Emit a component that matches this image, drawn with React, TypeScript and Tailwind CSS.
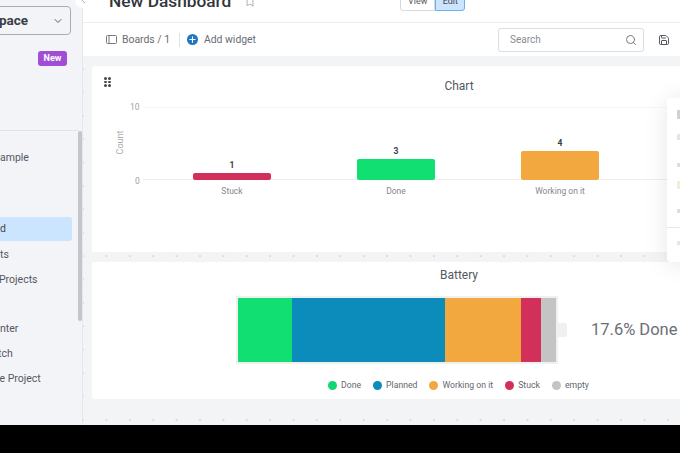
import { Search, ChevronDown, ChevronLeft, Bookmark, Save, Plus } from "lucide-react";

const font = "font-['Roboto',sans-serif]";

const bars = [
  { label: "Stuck", value: "1", height: "h-[7px]", color: "bg-[#d22f5b]", ml: "ml-[65px]" },
  { label: "Done", value: "3", height: "h-[21px]", color: "bg-[#12df72]", ml: "ml-[85px]" },
  { label: "Working on it", value: "4", height: "h-[29px]", color: "bg-[#f2a83f]", ml: "ml-[85px]" },
];

const legend = [
  { label: "Done", color: "bg-[#12d672]" },
  { label: "Planned", color: "bg-[#0b8cbb]" },
  { label: "Working on it", color: "bg-[#f2a83f]" },
  { label: "Stuck", color: "bg-[#d22f5b]" },
  { label: "empty", color: "bg-[#c4c4c4]" },
];

// faint row icons of the menu that the window edge cuts off
const menuMarks = [
  { h: "h-[9px]", mt: "mt-[12px]", color: "bg-[#cfd0d3]" },
  { h: "h-[6px]", mt: "mt-[15px]", color: "bg-[#e4e5e7]" },
  { h: "h-[4px]", mt: "mt-[23px]", color: "bg-[#dcdde0]" },
  { h: "h-[8px]", mt: "mt-[14px]", color: "bg-[#f3ecd9]" },
  { h: "h-[4px]", mt: "mt-[20px]", color: "bg-[#dcdde0]" },
];

function Sidebar() {
  return (
    <aside className="w-[83px] shrink-0 bg-[#f3f4f7] relative overflow-hidden border-r border-[#e6e7ea]">
      <div className="w-[80px] h-[29px] -ml-[9px] mt-[6px] border border-[#a9abb3] rounded-[4px] flex items-center justify-between pl-[7px] pr-[6px]">
        <span className="text-[13.5px] font-bold text-[#3b3d45] leading-none whitespace-nowrap">pace</span>
        <ChevronDown size={12} className="text-[#5a5c66]" />
      </div>
      <div className="flex justify-end pr-[15px] mt-[16px]">
        <span className="w-[29px] h-[15px] rounded-[3px] bg-[#a14ed6] text-white text-[9px] font-bold flex items-center justify-center">New</span>
      </div>
      <div className="w-[78px] h-px bg-[#e1e2e6] mt-[64px]" />
      <div className="text-[10.5px] text-[#55575f] mt-[21px] leading-[12px]">ample</div>
      <div className="w-[72px] h-[24px] mt-[53px] bg-[#cce5ff] rounded-r-[3px] flex items-center text-[10.5px] text-[#44464e]">d</div>
      <div className="text-[10.5px] text-[#55575f] mt-[7px] leading-[13px]">ts</div>
      <div className="text-[10.5px] text-[#55575f] mt-[12px] -ml-[1px] leading-[13px]">Projects</div>
      <div className="text-[10.5px] text-[#55575f] mt-[36px] leading-[13px]">nter</div>
      <div className="text-[10.5px] text-[#55575f] mt-[12px] -ml-[2px] leading-[13px]">tch</div>
      <div className="text-[10.5px] text-[#55575f] mt-[12px] -ml-[3px] leading-[13px]">le Project</div>
      {/* scrollbar */}
      <div className="absolute left-[78px] top-[131px] w-[4px] h-[190px] rounded-full bg-[#c3c5cb]" />
    </aside>
  );
}

function ChartCard() {
  return (
    <section className="h-[186px] bg-white rounded-tl-[3px] relative">
      <div className="absolute left-[12px] top-[11px] grid grid-cols-2 gap-x-[1px] gap-y-[1px]">
        {[0, 1, 2, 3, 4, 5].map((i) => (
          <span key={i} className="w-[3px] h-[2.5px] rounded-full bg-[#44464e]" />
        ))}
      </div>
      <h2 className="text-[12px] text-[#55575f] text-center pt-[13px] leading-[14px] w-[734px]">Chart</h2>
      <div className="ml-[36px] mt-[12px] h-[76px] pb-[1px] relative flex items-end">
        <span className="absolute left-[2px] top-[-2px] text-[8.5px] text-[#a0a2a8] leading-none">10</span>
        <span className="absolute left-[-23px] top-[33px] text-[9px] text-[#a8aab0] leading-none -rotate-90 origin-center w-[30px] text-center">Count</span>
        <span className="absolute left-[7px] bottom-[-4px] text-[8.5px] text-[#a0a2a8] leading-none">0</span>
        <div className="absolute left-[15px] right-0 top-[2px] h-px bg-[#f7f7f8]" />
        <div className="absolute left-[15px] right-0 bottom-[1px] h-px bg-[#eeeff0]" />
        <div className="flex items-end relative">
          {bars.map((b) => (
            <div key={b.label} className={`${b.ml} w-[78px] mr-[1px] flex flex-col items-center relative`}>
              <span className="text-[8.5px] font-bold text-[#3a3c44] leading-none mb-[4px]">{b.value}</span>
              <div className={`${b.height} ${b.color} w-full rounded-[2px]`} />
              <span className="absolute top-full mt-[7px] text-[8.5px] text-[#85878e] leading-none whitespace-nowrap">{b.label}</span>
            </div>
          ))}
        </div>
      </div>
    </section>
  );
}

function BatteryCard() {
  return (
    <section className="h-[137px] mt-[10px] bg-white rounded-bl-[3px]">
      <h2 className="text-[12px] text-[#55575f] text-center pt-[6px] leading-[14px] w-[734px]">Battery</h2>
      <div className="flex items-center ml-[144px] mt-[14px]">
        <div className="w-[322px] h-[68px] border-2 border-[#eff0f0] flex shrink-0">
          <div className="w-[54px] bg-[#12df72]" />
          <div className="w-[153px] bg-[#0b8cbb]" />
          <div className="w-[76px] bg-[#f2a83f]" />
          <div className="w-[20px] bg-[#d22f5b]" />
          <div className="w-[15px] bg-[#c4c4c4]" />
        </div>
        <div className="w-[9px] h-[14px] bg-[#eff0f0] rounded-r-[2px] shrink-0" />
        <span className="ml-[24px] mt-[1px] text-[16.5px] text-[#6c6e75] leading-none whitespace-nowrap">17.6% Done</span>
      </div>
      <div className="flex items-center ml-[236px] mt-[17px] text-[8.7px] text-[#65676e] leading-none">
        {legend.map((l) => (
          <div key={l.label} className="flex items-center gap-[4px] mr-[12px] whitespace-nowrap">
            <span className={`w-[9px] h-[9px] rounded-full ${l.color}`} />
            {l.label}
          </div>
        ))}
      </div>
    </section>
  );
}

export default function App() {
  return (
    <div className={`${font} w-[680px] h-[453px] overflow-hidden bg-black flex flex-col`}>
      <div className="h-[425px] flex overflow-hidden relative">
        <Sidebar />
        <main className="flex-1 min-w-0 flex flex-col bg-[#f3f4f6]">
          <header className="h-[23px] bg-white border-b border-[#eceded] flex relative overflow-hidden">
            <h1 className="ml-[26px] -mt-[9px] text-[17.3px] font-medium text-[#33353d] leading-[20px] whitespace-nowrap">New Dashboard</h1>
            <Bookmark size={10} className="ml-[14px] -mt-[3px] text-[#a0a2a8]" />
            <div className="ml-[145px] -mt-[8px] h-[19px] flex text-[9px]">
              <span className="w-[35px] border border-[#d8d9dd] rounded-l-[3px] flex items-center justify-center text-[#55575f]">View</span>
              <span className="w-[30px] border border-[#6fb0ea] bg-[#cce5ff] rounded-r-[3px] flex items-center justify-center text-[#44464e]">Edit</span>
            </div>
          </header>
          <div className="h-[33px] bg-white flex items-center text-[10.4px] text-[#6a6c73]">
            <svg width="11" height="9" viewBox="0 0 11 9" fill="none" stroke="#777981" className="ml-[23px]">
              <rect x="0.5" y="0.5" width="10" height="8" rx="1" />
              <path d="M3 0.5v8" />
            </svg>
            <span className="ml-[5px]">Boards / 1</span>
            <div className="ml-[9px] w-px h-[14px] bg-[#dfe0e3]" />
            <span className="ml-[7px] w-[11px] h-[11px] rounded-full bg-[#1f76c2] flex items-center justify-center">
              <Plus size={9} strokeWidth={3} className="text-white" />
            </span>
            <span className="ml-[6px]">Add widget</span>
            <div className="ml-[242px] w-[146px] h-[24px] border border-[#dcdde0] rounded-[3px] flex items-center justify-between pl-[11px] pr-[6px] text-[10px] text-[#8a8c92]">
              Search
              <Search size={12} className="text-[#77797f]" />
            </div>
            <Save size={12} className="ml-[14px] text-[#55575f]" />
          </div>
          {/* dotted canvas behind the widgets */}
          <div className="flex-1 pl-[9px] pt-[10px] overflow-hidden bg-[radial-gradient(circle,#d3d4d8_0.6px,transparent_1px)] bg-[size:23.4px_23.4px] bg-[position:-11.7px_1.3px]">
            <ChartCard />
            <BatteryCard />
          </div>
        </main>
        {/* collapse toggle */}
        <div className="absolute left-[75px] -top-[8px] w-[16px] h-[16px] rounded-full bg-white flex items-center justify-center">
          <ChevronLeft size={9} className="text-[#85878e]" />
        </div>
        {/* dropdown cut off by the window edge */}
        <div className="absolute left-[667px] top-[98px] w-[60px] h-[164px] bg-white rounded-l-[4px] shadow-[0_2px_24px_rgba(0,0,0,0.1)] overflow-hidden">
          <div className="flex flex-col pl-[10px]">
            {menuMarks.map((m, i) => (
              <span key={i} className={`${m.mt} ${m.h} ${m.color} w-[4px] rounded-[1px]`} />
            ))}
          </div>
          <div className="h-px bg-[#e6e7ea] mt-[14px]" />
          <span className="block ml-[10px] mt-[13px] w-[4px] h-[4px] rounded-[1px] bg-[#e4e5e7]" />
        </div>
      </div>
    </div>
  );
}
